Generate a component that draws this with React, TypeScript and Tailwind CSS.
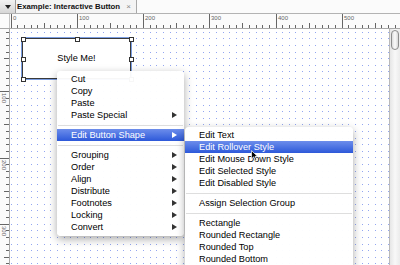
import React from "react";

const P = 6.62;

function Dots() {
  let d = "";
  for (let j = 0; j < 37; j++) {
    const y = Math.round(2.7 + P * j);
    for (let i = 0; i < 58; i++) {
      const x = Math.round(0.7 + P * i);
      d += `M${x} ${y}h1v1h-1z`;
    }
  }
  return (
    <svg className="absolute inset-0" width={379} height={236}>
      <path d={d} fill="#93a6f0" />
    </svg>
  );
}

function HRuler() {
  const els: React.ReactNode[] = [];
  for (let k = 0; k < 60; k++) {
    const x = Math.round(0.7 + P * k);
    const major = k % 10 === 0;
    const mid = k % 5 === 0;
    const y0 = major ? 0 : mid ? 9 : 11;
    els.push(<rect key={"r" + k} x={x} y={y0} width={1} height={14 - y0} fill="#666" />);
    if (major)
      els.push(
        <text key={"t" + k} x={x + 2} y={6} fontSize={6} fill="#666" fontFamily="Liberation Sans, Arial, sans-serif">
          {k * 10}
        </text>
      );
  }
  return (
    <svg width={390} height={14} shapeRendering="crispEdges">
      {els}
    </svg>
  );
}

function VRuler() {
  const els: React.ReactNode[] = [];
  for (let k = 0; k < 38; k++) {
    const y = Math.round(-3.9 + P * k);
    const major = k % 10 === 0;
    const mid = k % 5 === 0;
    const x0 = major ? 0 : mid ? 4 : 6;
    els.push(<rect key={"r" + k} x={x0} y={y} width={9 - x0} height={1} fill="#666" />);
    if (major && k > 0)
      els.push(
        <text
          key={"t" + k}
          x={2}
          y={y + 2}
          fontSize={6}
          fill="#666"
          fontFamily="Liberation Sans, Arial, sans-serif"
          transform={`rotate(90 2 ${y + 2})`}
        >
          {k * 10}
        </text>
      );
  }
  return (
    <svg width={9} height={236} shapeRendering="crispEdges">
      {els}
    </svg>
  );
}

function Tri({ white }: { white?: boolean }) {
  return (
    <svg width={5} height={6} viewBox="0 0 5 6">
      <path d="M0 0L5 3L0 6Z" fill={white ? "#fff" : "#333"} />
    </svg>
  );
}

function Item({ label, arrow, active }: { label: string; arrow?: boolean; active?: boolean }) {
  return (
    <div
      className={
        active
          ? "h-[12px] flex items-center justify-between pl-[14px] pr-[7px] bg-linear-to-b from-[#6d8deb] to-[#2d58d9] text-white"
          : "h-[12px] flex items-center justify-between pl-[14px] pr-[7px] text-black"
      }
    >
      <span className="leading-[12px] whitespace-nowrap">{label}</span>
      {arrow ? <Tri white={active} /> : null}
    </div>
  );
}

function Sep() {
  return (
    <div className="h-[8px] flex items-center px-[1px]">
      <div className="h-px w-full bg-[#dedede]" />
    </div>
  );
}

function Handle({ x, y }: { x: number; y: number }) {
  return (
    <div
      className="absolute w-[5px] h-[5px] bg-white border border-[#333]"
      style={{ left: x - 2, top: y - 2 }}
    />
  );
}

function Cursor() {
  return (
    <svg className="absolute left-[241px] top-[121px]" width={7} height={11} viewBox="-1 -1 13 20">
      <path d="M0 0L0 15L4 11.5L7 18L9.5 17L6.5 10.5L11 10.5Z" fill="#000" stroke="#fff" strokeWidth={1.3} />
    </svg>
  );
}

export default function App() {
  return (
    <div className="w-[400px] h-[265px] flex flex-col bg-white overflow-hidden font-['Liberation_Sans',Arial,sans-serif] select-none">
      {/* Tab bar */}
      <div className="h-[14px] flex bg-[#fbfbfb] border-b border-[#b3b3b3] shrink-0">
        <div className="w-[16px] flex items-center justify-center bg-linear-to-b from-[#f2f2f2] to-[#d6d6d6] border-r border-[#9c9c9c]">
          <svg width={6} height={4} viewBox="0 0 6 4">
            <path d="M0 0H6L3 4Z" fill="#222" />
          </svg>
        </div>
        <div className="w-[121px] flex items-center justify-between pl-[1px] pr-[5px] bg-[#f4f4f4] border-r border-[#a9a9a9]">
          <span className="text-[7.8px] font-bold text-[#111] leading-none whitespace-nowrap">Example: Interactive Button</span>
          <span className="text-[8px] text-[#888] leading-none">×</span>
        </div>
        <div className="flex-1" />
      </div>

      {/* Ruler row */}
      <div className="h-[15px] flex shrink-0 border-b border-[#a8a8a8] bg-[#fbfbfb]">
        <div className="w-[10px] border-r border-[#c4c4c4]" />
        <div className="flex-1 overflow-hidden">
          <HRuler />
        </div>
      </div>

      {/* Main */}
      <div className="flex-1 flex min-h-0">
        <div className="w-[10px] border-r border-[#a8a8a8] bg-[#fbfbfb] overflow-hidden">
          <VRuler />
        </div>
        <div className="flex-1 relative overflow-hidden bg-white">
          <Dots />

          {/* Button shape */}
          <div className="absolute left-[12px] top-[9px] w-[109px] h-[41px] bg-white border border-[#3a3a3a] outline outline-[#7b9ee2] flex items-center justify-center">
            <span className="text-[9.2px] text-black">Style Me!</span>
          </div>
          <Handle x={12.5} y={9.5} />
          <Handle x={66.5} y={9.5} />
          <Handle x={120.5} y={9.5} />
          <Handle x={12.5} y={29.5} />
          <Handle x={120.5} y={29.5} />
          <Handle x={12.5} y={49.5} />
          <Handle x={66.5} y={49.5} />
          <Handle x={120.5} y={49.5} />

          {/* Context menu */}
          <div className="absolute left-[47px] top-[42px] w-[127px] pt-[2px] pb-[3px] bg-white/[0.96] rounded-[4px] shadow-[0_3px_9px_rgba(0,0,0,0.35)] text-[9.2px]">
            <Item label="Cut" />
            <Item label="Copy" />
            <Item label="Paste" />
            <Item label="Paste Special" arrow />
            <Sep />
            <Item label="Edit Button Shape" arrow active />
            <Sep />
            <Item label="Grouping" arrow />
            <Item label="Order" arrow />
            <Item label="Align" arrow />
            <Item label="Distribute" arrow />
            <Item label="Footnotes" arrow />
            <Item label="Locking" arrow />
            <Item label="Convert" arrow />
          </div>

          {/* Submenu */}
          <div className="absolute left-[175px] top-[98px] w-[168px] h-[150px] pt-[2px] bg-white/[0.96] rounded-t-[4px] shadow-[0_3px_9px_rgba(0,0,0,0.35)] text-[9.2px]">
            <Item label="Edit Text" />
            <Item label="Edit Rollover Style" active />
            <Item label="Edit Mouse Down Style" />
            <Item label="Edit Selected Style" />
            <Item label="Edit Disabled Style" />
            <Sep />
            <Item label="Assign Selection Group" />
            <Sep />
            <Item label="Rectangle" />
            <Item label="Rounded Rectangle" />
            <Item label="Rounded Top" />
            <Item label="Rounded Bottom" />
          </div>

          <Cursor />
        </div>
        <div className="w-[11px] border-l border-[#b9b9b9] bg-linear-to-r from-[#e6e6e6] via-[#f8f8f8] to-[#ebebeb] pt-[1px] px-[1px]">
          <div className="h-[20px] rounded-full border border-[#8d8d8d] bg-linear-to-r from-[#dcdcdc] via-[#fbfbfb] to-[#d8d8d8]" />
        </div>
      </div>
    </div>
  );
}
